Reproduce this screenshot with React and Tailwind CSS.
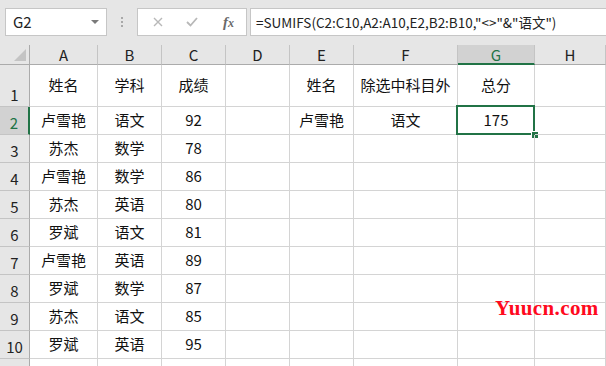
import { Fragment } from "react";

const FONT = { fontFamily: '"Noto Sans CJK SC", "Noto Sans", sans-serif' };

const cols = ["A", "B", "C", "D", "E", "F", "G", "H"];

const data = [
  ["姓名", "学科", "成绩", "", "姓名", "除选中科目外", "总分", ""],
  ["卢雪艳", "语文", "92", "", "卢雪艳", "语文", "175", ""],
  ["苏杰", "数学", "78", "", "", "", "", ""],
  ["卢雪艳", "数学", "86", "", "", "", "", ""],
  ["苏杰", "英语", "80", "", "", "", "", ""],
  ["罗斌", "语文", "81", "", "", "", "", ""],
  ["卢雪艳", "英语", "89", "", "", "", "", ""],
  ["罗斌", "数学", "87", "", "", "", "", ""],
  ["苏杰", "语文", "85", "", "", "", "", ""],
  ["罗斌", "英语", "95", "", "", "", "", ""],
  ["", "", "", "", "", "", "", ""],
];

const FormulaBar = () => (
  <div className="flex items-start h-[45px] bg-[#e6e6e6] pt-[8px]">
    <div className="ml-[5px] w-[102px] h-[28px] bg-white border border-[#c6c6c6] flex items-center justify-between pl-[7px] pr-[7px]">
      <span className="text-[15px] text-[#222]">G2</span>
      <svg width="8" height="5" viewBox="0 0 8 5">
        <path d="M0 0 L8 0 L4 4 Z" fill="#7a7a7a" />
      </svg>
    </div>
    <div className="w-[30px] h-[28px] flex flex-col items-center justify-center gap-[2px]">
      <span className="w-[2px] h-[2px] bg-[#a8a8a8]" />
      <span className="w-[2px] h-[2px] bg-[#a8a8a8]" />
      <span className="w-[2px] h-[2px] bg-[#a8a8a8]" />
    </div>
    <div className="w-[110px] h-[28px] bg-white border border-[#c6c6c6] flex items-center">
      <svg className="ml-[15px]" width="10" height="10" viewBox="0 0 10 10">
        <path d="M1 1 L9 9 M9 1 L1 9" stroke="#b8b8b8" strokeWidth="1.4" />
      </svg>
      <svg className="ml-[23px]" width="12" height="10" viewBox="0 0 12 10">
        <path d="M1 5 L4.5 8.5 L11 1" stroke="#b8b8b8" strokeWidth="1.8" fill="none" />
      </svg>
      <span className="ml-[25px] font-['Liberation_Serif',serif] text-[15px] italic font-bold text-[#6a6a6a]">
        f<span className="text-[12px]">x</span>
      </span>
    </div>
    <div className="ml-[3px] flex-1 h-[28px] bg-white border-y border-l border-[#c6c6c6] flex items-center pl-[5px]">
      <span className="text-[13.5px] text-[#222] whitespace-nowrap">
        =SUMIFS(C2:C10,A2:A10,E2,B2:B10,"&lt;&gt;"&amp;"语文")
      </span>
    </div>
  </div>
);

const App = () => (
  <div className="relative w-[606px] h-[366px] overflow-hidden bg-white" style={FONT}>
    <FormulaBar />
    <div className="grid grid-cols-[30px_68px_64px_64px_64px_64px_104px_77px_71px]">
      <div className="h-[20px] bg-[#e6e6e6] border-r border-b border-[#ababab] flex items-end justify-end pr-[3px] pb-[3px]">
        <svg width="12" height="12" viewBox="0 0 12 12">
          <path d="M12 0 L12 12 L0 12 Z" fill="#c4c4c4" />
        </svg>
      </div>
      {cols.map((c) =>
        c === "G" ? (
          <div
            key={c}
            className="h-[20px] bg-[#d2d2d2] border-r border-[#c4c4c4] border-b-2 border-b-[#217346] flex items-center justify-center text-[15px] leading-none text-[#217346]"
          >
            {c}
          </div>
        ) : (
          <div
            key={c}
            className="h-[20px] bg-[#e6e6e6] border-r border-[#c4c4c4] border-b border-b-[#ababab] flex items-center justify-center text-[15px] leading-none text-[#222]"
          >
            {c}
          </div>
        )
      )}
      {data.map((row, r) => (
        <Fragment key={r}>
          <div
            className={
              r === 1
                ? "bg-[#d2d2d2] border-r-2 border-r-[#217346] border-b border-b-[#c4c4c4] flex items-end justify-center text-[15px] leading-none pb-[4px] text-[#217346]"
                : r === 0
                ? "h-[42px] bg-[#e6e6e6] border-r border-r-[#ababab] border-b border-b-[#c4c4c4] flex items-end justify-center text-[15px] leading-none pb-[4px] text-[#222]"
                : "h-[28px] bg-[#e6e6e6] border-r border-r-[#ababab] border-b border-b-[#c4c4c4] flex items-end justify-center text-[15px] leading-none pb-[4px] text-[#222]"
            }
          >
            {r < 10 ? r + 1 : ""}
          </div>
          {row.map((v, c) => (
            <div
              key={c}
              className={
                (r === 0 ? "h-[42px] " : "h-[28px] ") +
                "relative border-r border-b border-[#d4d4d4] flex items-center justify-center text-[15px] text-[#111] whitespace-nowrap"
              }
            >
              {v}
              {r === 1 && c === 6 && (
                <div className="absolute left-[-2px] top-[-2px] right-[-1px] bottom-[-1px] border-2 border-[#217346]">
                  <div className="absolute right-[-6px] bottom-[-6px] w-[8px] h-[8px] bg-[#217346] border border-white" />
                </div>
              )}
            </div>
          ))}
        </Fragment>
      ))}
    </div>
    <div className="absolute left-[495px] top-[298px] font-['Liberation_Serif',serif] text-[21px] font-bold leading-none tracking-[0.4px] text-[#ff0a1e]">
      Yuucn.com
    </div>
  </div>
);

export default App;
